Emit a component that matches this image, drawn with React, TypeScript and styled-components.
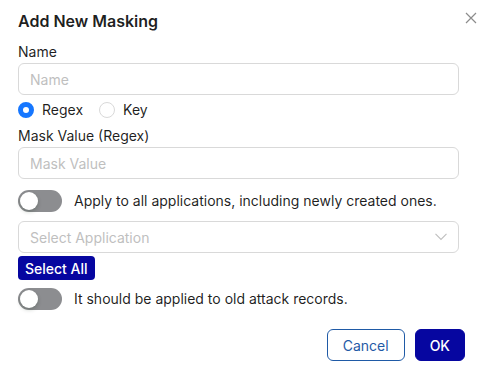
import React, { useState } from "react";
import styled, { createGlobalStyle } from "styled-components";

const GlobalStyle = createGlobalStyle`
  body {
    margin: 0;
    background: #ffffff;
    font-family: Inter, "Liberation Sans", sans-serif;
    color: rgba(0, 0, 0, 0.88);
  }
  * {
    box-sizing: border-box;
  }
`;

const Modal = styled.div`
  width: 488px;
  height: 373px;
  padding: 9px 11px 0 18px;
  background: #ffffff;
`;

const Header = styled.div`
  display: flex;
  justify-content: space-between;
  align-items: flex-start;
`;

const Title = styled.h2`
  margin: 0;
  font-size: 16px;
  line-height: 24px;
  font-weight: 600;
  color: rgba(0, 0, 0, 0.88);
`;

const CloseButton = styled.button`
  width: 12px;
  height: 12px;
  margin-top: 3px;
  padding: 0;
  border: none;
  background: transparent;
  cursor: pointer;
  display: flex;
`;

const Form = styled.div`
  width: 441px;
  margin-top: 9px;
  display: flex;
  flex-direction: column;
`;

const Label = styled.label<{ $gap?: number }>`
  display: block;
  font-size: 14px;
  line-height: 20px;
  margin-top: ${(p) => p.$gap ?? 0}px;
  margin-bottom: 1px;
  color: rgba(0, 0, 0, 0.88);
`;

const Input = styled.input`
  width: 100%;
  height: 32px;
  padding: 4px 11px;
  border: 1px solid #d9d9d9;
  border-radius: 6px;
  font-family: inherit;
  font-size: 14px;
  color: rgba(0, 0, 0, 0.88);
  outline: none;

  &::placeholder {
    color: #bfbfbf;
  }
`;

const RadioGroup = styled.div`
  display: flex;
  align-items: center;
  gap: 16px;
  height: 22px;
  margin-top: 4px;
`;

const RadioOption = styled.label`
  display: flex;
  align-items: center;
  gap: 8px;
  font-size: 14px;
  line-height: 22px;
  cursor: pointer;
`;

const RadioDot = styled.span<{ $checked: boolean }>`
  width: 16px;
  height: 16px;
  border-radius: 50%;
  background: #ffffff;
  border: ${(p) => (p.$checked ? "5px solid #1677ff" : "1px solid #d9d9d9")};
`;

const SwitchRow = styled.div<{ $gap: number }>`
  display: flex;
  align-items: center;
  gap: 12px;
  margin-top: ${(p) => p.$gap}px;
  font-size: 14px;
  line-height: 22px;
`;

const Switch = styled.button<{ $on: boolean }>`
  position: relative;
  width: 44px;
  height: 22px;
  flex-shrink: 0;
  padding: 0;
  border: none;
  border-radius: 11px;
  background: ${(p) => (p.$on ? "#1677ff" : "#8c8d90")};
  cursor: pointer;

  &::after {
    content: "";
    position: absolute;
    top: 2px;
    left: ${(p) => (p.$on ? "24px" : "2px")};
    width: 18px;
    height: 18px;
    border-radius: 50%;
    background: #ffffff;
    box-shadow: 0 2px 4px rgba(0, 35, 11, 0.2);
  }
`;

const Select = styled.div`
  display: flex;
  align-items: center;
  justify-content: space-between;
  height: 32px;
  margin-top: 9px;
  padding: 0 11px;
  border: 1px solid #d9d9d9;
  border-radius: 6px;
  font-size: 14px;
  color: #bfbfbf;
`;

const SelectAllButton = styled.button`
  align-self: flex-start;
  height: 24px;
  margin-top: 3px;
  padding: 0 7px;
  border: none;
  border-radius: 4px;
  background: #0606a0;
  color: #ffffff;
  font-family: inherit;
  font-size: 14px;
  font-weight: 500;
  cursor: pointer;
`;

const Footer = styled.div`
  display: flex;
  justify-content: flex-end;
  gap: 10px;
  margin-top: 19px;
  margin-right: 12px;
`;

const FooterButton = styled.button<{ $primary?: boolean }>`
  height: 32px;
  padding: 0 ${(p) => (p.$primary ? 14 : 15)}px;
  border-radius: 6px;
  font-family: inherit;
  font-size: 14px;
  font-weight: ${(p) => (p.$primary ? 500 : 400)};
  border: 1px solid ${(p) => (p.$primary ? "#0606a0" : "#1f5aa6")};
  background: ${(p) => (p.$primary ? "#0606a0" : "#ffffff")};
  color: ${(p) => (p.$primary ? "#ffffff" : "#1f5aa6")};
  cursor: pointer;
`;

const App: React.FC = () => {
  const [mode, setMode] = useState<"regex" | "key">("regex");
  const [applyAll, setApplyAll] = useState(false);
  const [applyOld, setApplyOld] = useState(false);

  return (
    <Modal>
      <GlobalStyle />
      <Header>
        <Title>Add New Masking</Title>
        <CloseButton aria-label="Close">
          <svg width="12" height="12" viewBox="0 0 12 12">
            <path d="M1 1L11 11M11 1L1 11" stroke="#8c8c8c" strokeWidth="1.2" />
          </svg>
        </CloseButton>
      </Header>

      <Form>
        <Label>Name</Label>
        <Input placeholder="Name" />

        <RadioGroup>
          <RadioOption onClick={() => setMode("regex")}>
            <RadioDot $checked={mode === "regex"} />
            Regex
          </RadioOption>
          <RadioOption onClick={() => setMode("key")}>
            <RadioDot $checked={mode === "key"} />
            Key
          </RadioOption>
        </RadioGroup>

        <Label $gap={5}>Mask Value ({mode === "regex" ? "Regex" : "Key"})</Label>
        <Input placeholder="Mask Value" />

        <SwitchRow $gap={11}>
          <Switch $on={applyAll} onClick={() => setApplyAll(!applyAll)} />
          Apply to all applications, including newly created ones.
        </SwitchRow>

        <Select>
          Select Application
          <svg width="12" height="8" viewBox="0 0 12 8">
            <path d="M0.5 0.8L6 6.5L11.5 0.8" fill="none" stroke="#bfbfbf" strokeWidth="1.1" />
          </svg>
        </Select>

        <SelectAllButton>Select All</SelectAllButton>

        <SwitchRow $gap={8}>
          <Switch $on={applyOld} onClick={() => setApplyOld(!applyOld)} />
          It should be applied to old attack records.
        </SwitchRow>
      </Form>

      <Footer>
        <FooterButton>Cancel</FooterButton>
        <FooterButton $primary>OK</FooterButton>
      </Footer>
    </Modal>
  );
};

export default App;
